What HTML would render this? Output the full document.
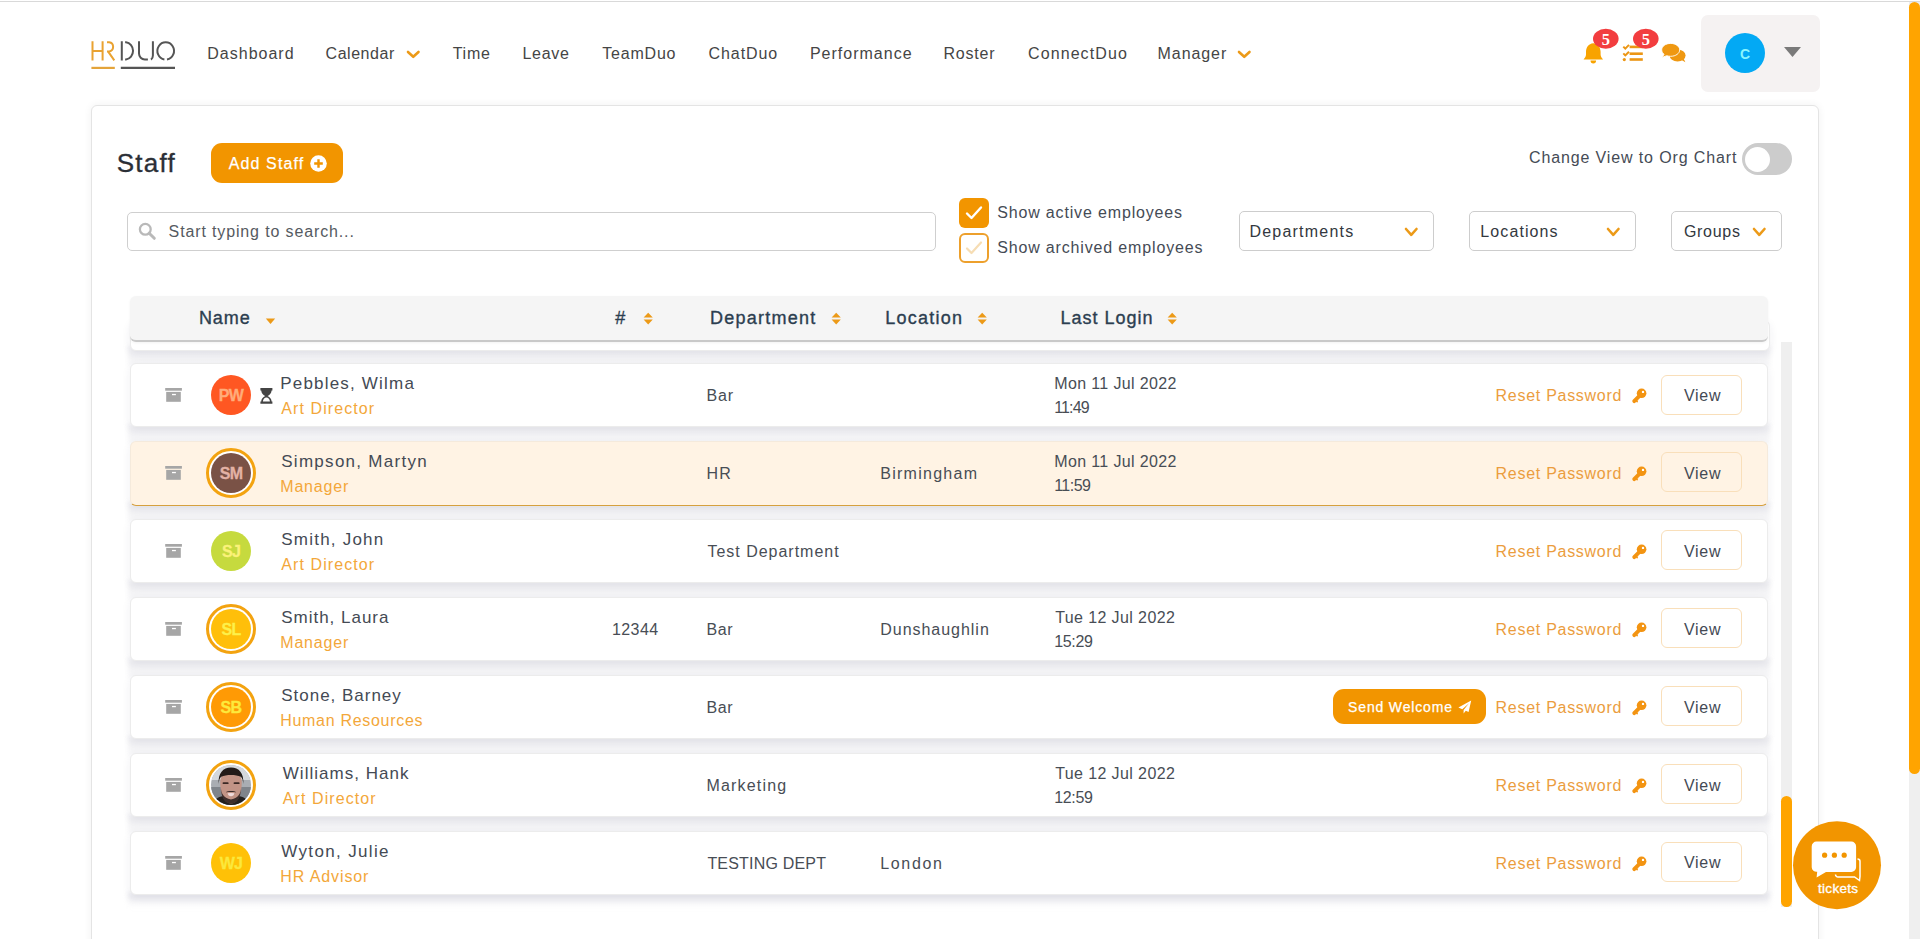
<!DOCTYPE html>
<html><head><meta charset="utf-8"><title>Staff</title>
<style>
html,body{margin:0;padding:0;}
body{width:1920px;height:939px;overflow:hidden;position:relative;background:#fff;font-family:"Liberation Sans", sans-serif;}
.t{position:absolute;white-space:nowrap;line-height:1;font-family:"Liberation Sans", sans-serif;}
svg{overflow:visible}
</style></head><body>
<div style="position:absolute;left:0px;top:1px;width:1920px;height:1px;background:#d9d9d9"></div>
<svg style="position:absolute;left:85px;top:35px" width="96" height="40" viewBox="85 35 96 40" fill="none">
<g stroke="#e9a231" stroke-width="2" stroke-linecap="butt">
<path d="M92.5 41.3V60.4M102.6 41.3V60.4M92.5 51.1H102.6"/>
<path d="M107 42.3H109.2A4.6 4.6 0 0 1 109.2 51.4H107M108.2 51.6L114.3 60.4"/>
</g>
<g stroke="#555" stroke-width="2">
<path d="M121.8 41.3V60.4M125.1 42.3H126A7.9 8.6 0 0 1 126 59.4H125.1"/>
<path d="M139 41.3V53.6A5.8 5.8 0 0 0 144.8 59.4H147.9M152.9 41.3V55.6Q152.9 58.3 151 59.6"/>
<path d="M164.4 59.4A8.3 8.6 0 1 1 167 59.4"/>
</g>
<path d="M91.4 67.9H114.8" stroke="#e4a43a" stroke-width="2.2"/>
<path d="M120.8 67.9H175" stroke="#555" stroke-width="2.2"/>
</svg>
<div class="t" style="left:207.30px;top:46.00px;font-size:16px;letter-spacing:1.003px;color:#454545;font-weight:400;">Dashboard</div>
<div class="t" style="left:325.60px;top:46.00px;font-size:16px;letter-spacing:0.528px;color:#454545;font-weight:400;">Calendar</div>
<div class="t" style="left:452.70px;top:46.00px;font-size:16px;letter-spacing:0.746px;color:#454545;font-weight:400;">Time</div>
<div class="t" style="left:522.50px;top:46.00px;font-size:16px;letter-spacing:0.676px;color:#454545;font-weight:400;">Leave</div>
<div class="t" style="left:602.20px;top:46.00px;font-size:16px;letter-spacing:0.804px;color:#454545;font-weight:400;">TeamDuo</div>
<div class="t" style="left:708.60px;top:46.00px;font-size:16px;letter-spacing:0.908px;color:#454545;font-weight:400;">ChatDuo</div>
<div class="t" style="left:809.90px;top:46.00px;font-size:16px;letter-spacing:1.010px;color:#454545;font-weight:400;">Performance</div>
<div class="t" style="left:943.50px;top:46.00px;font-size:16px;letter-spacing:0.801px;color:#454545;font-weight:400;">Roster</div>
<div class="t" style="left:1028.00px;top:46.00px;font-size:16px;letter-spacing:1.095px;color:#454545;font-weight:400;">ConnectDuo</div>
<div class="t" style="left:1157.60px;top:46.00px;font-size:16px;letter-spacing:0.913px;color:#454545;font-weight:400;">Manager</div>
<svg style="position:absolute;left:404.9px;top:49px" width="16.5" height="11" viewBox="404.9 49 16.5 11"><path d="M407.9 52L413.15 56.8L418.4 52" fill="none" stroke="#ec9a18" stroke-width="2.6" stroke-linecap="round" stroke-linejoin="round"/></svg>
<svg style="position:absolute;left:1235.8px;top:49px" width="16.5" height="11" viewBox="1235.8 49 16.5 11"><path d="M1238.8 52L1244.05 56.8L1249.3 52" fill="none" stroke="#ec9a18" stroke-width="2.6" stroke-linecap="round" stroke-linejoin="round"/></svg>
<svg style="position:absolute;left:1580px;top:24px" width="110" height="44" viewBox="1580 24 110 44">
<path fill="#f8a300" d="M1593.2 43.2c-4.6 0.4-7.2 4.2-7.2 8.6v2.6c0 1.9-1 3.3-2.1 4.6l-0.3 0.4h19.4l-0.3-0.4c-1.1-1.3-2.1-2.7-2.1-4.6v-2.6c0-4.4-2.6-8.2-7.2-8.6z"/>
<path fill="#f8a300" d="M1590.5 60.6h5.6a2.8 3 0 0 1-5.6 0z"/>
<g fill="#ec9614">
<path d="M1622.6 47.3l1.4-1.4 1.3 1.3 3-3 1.4 1.4-4.4 4.4z"/>
<path d="M1622.6 54.1l1.4-1.4 1.3 1.3 3-3 1.4 1.4-4.4 4.4z"/>
<circle cx="1624.3" cy="59.6" r="1.6"/>
<rect x="1629.6" y="45.6" width="13.2" height="2.6"/>
<rect x="1629.6" y="52.4" width="13.2" height="2.6"/>
<rect x="1629.6" y="58.2" width="13.2" height="2.6"/>
</g>
<ellipse cx="1677.6" cy="55.6" rx="8" ry="6" fill="#ef9811"/><path fill="#ef9811" d="M1681.5 60L1685.4 62.2L1683.6 58.5z"/>
<path fill="#ef9811" stroke="#fff" stroke-width="0.9" d="M1670.7 43.4c-5 0-9 2.9-9 6.5 0 1.7 0.9 3.3 2.4 4.4l-2.1 3.1 4.8-1.7c1.2 0.4 2.5 0.6 3.9 0.6 5 0 9-2.9 9-6.4s-4-6.5-9-6.5z"/>
<ellipse cx="1605.8" cy="38.8" rx="12.8" ry="10" fill="#f23d3f"/>
<ellipse cx="1645.8" cy="38.8" rx="12.8" ry="10" fill="#f23d3f"/>
<text x="1605.8" y="44.8" text-anchor="middle" font-family="Liberation Serif" font-weight="700" font-size="16.5" fill="#fff">5</text>
<text x="1645.8" y="44.8" text-anchor="middle" font-family="Liberation Serif" font-weight="700" font-size="16.5" fill="#fff">5</text>
</svg>
<div style="position:absolute;left:1700.5px;top:15px;width:119px;height:77px;background:#f5f2f2;border-radius:7px"></div>
<div style="position:absolute;left:1725px;top:33px;width:40px;height:40px;background:#03a9f4;border-radius:50%"></div>
<div class="t" style="left:1725px;top:47px;width:40px;text-align:center;font-size:14px;font-weight:700;color:#8af6ff">C</div>
<svg style="position:absolute;left:1783px;top:46px" width="20" height="12"><path d="M1 1H18L9.5 11z" fill="#7a7a7a"/></svg>
<div style="position:absolute;left:1909px;top:2px;width:11px;height:937px;background:#efefef"></div>
<div style="position:absolute;left:1909px;top:2px;width:11px;height:771.5px;background:#ffa400;border-radius:6px"></div>
<div style="position:absolute;left:91px;top:105px;width:1726px;height:900px;background:#fff;border:1px solid #e4e4e4;border-radius:6px;box-shadow:0 0 8px rgba(0,0,0,.06)"></div>
<div class="t" style="left:116.75px;top:150.00px;font-size:26px;letter-spacing:1.268px;color:#2b2f36;font-weight:400;-webkit-text-stroke:0.35px #2b2f36">Staff</div>
<div style="position:absolute;left:211px;top:143px;width:131.5px;height:39.5px;background:#f29500;border-radius:11px"></div>
<div class="t" style="left:228.75px;top:156.00px;font-size:16px;letter-spacing:1.114px;color:#fff;font-weight:400;-webkit-text-stroke:0.25px #fff">Add Staff</div>
<svg style="position:absolute;left:309.5px;top:154.5px" width="17" height="17" viewBox="0 0 17 17"><circle cx="8.5" cy="8.5" r="8.3" fill="#fff"/><path d="M8.5 4.2V12.8M4.2 8.5H12.8" stroke="#f29500" stroke-width="2.4"/></svg>
<div class="t" style="left:1529.00px;top:150.00px;font-size:16px;letter-spacing:0.873px;color:#454b55;font-weight:400;">Change View to Org Chart</div>
<div style="position:absolute;left:1742px;top:143px;width:50px;height:31.5px;background:#cccccc;border-radius:16px"></div>
<div style="position:absolute;left:1745.3px;top:146.7px;width:25px;height:25px;background:#fff;border-radius:50%"></div>
<div style="position:absolute;left:127px;top:211.5px;width:809px;height:39px;box-sizing:border-box;border:1px solid #cfcfcf;border-radius:5px;background:#fff"></div>
<svg style="position:absolute;left:138px;top:222px" width="19" height="19" viewBox="0 0 19 19"><circle cx="7.3" cy="7.3" r="5.4" fill="none" stroke="#b9b9b9" stroke-width="2.3"/><path d="M11.2 11.2L16.3 16.3" stroke="#b9b9b9" stroke-width="3" stroke-linecap="round"/></svg>
<div class="t" style="left:168.60px;top:224.00px;font-size:16px;letter-spacing:0.863px;color:#555a61;font-weight:400;">Start typing to search...</div>
<div style="position:absolute;left:959px;top:198px;width:30px;height:30px;background:#f29500;border-radius:6px"></div>
<svg style="position:absolute;left:959px;top:198px" width="30" height="30"><path d="M8 15.5L12.5 20L22 9.5" fill="none" stroke="#fff" stroke-width="2.4" stroke-linecap="round" stroke-linejoin="round"/></svg>
<div style="position:absolute;left:959px;top:233px;width:30px;height:30px;box-sizing:border-box;border:2.4px solid #eda02c;border-radius:6px"></div>
<svg style="position:absolute;left:959px;top:233px" width="30" height="30"><path d="M8 15.5L12.5 20L22 9.5" fill="none" stroke="#f6ddb4" stroke-width="2.2" stroke-linecap="round" stroke-linejoin="round"/></svg>
<div class="t" style="left:997.20px;top:205.00px;font-size:16px;letter-spacing:0.841px;color:#454b55;font-weight:400;">Show active employees</div>
<div class="t" style="left:997.20px;top:240.00px;font-size:16px;letter-spacing:0.842px;color:#454b55;font-weight:400;">Show archived employees</div>
<div style="position:absolute;left:1238.5px;top:211.3px;width:195px;height:39.3px;box-sizing:border-box;border:1px solid #cdcdcd;border-radius:5px;background:#fff"></div>
<div class="t" style="left:1249.40px;top:224.00px;font-size:16px;letter-spacing:1.221px;color:#333840;font-weight:400;">Departments</div>
<svg style="position:absolute;left:1402.7px;top:225.9px" width="16.5" height="12" viewBox="1402.7 225.9 16.5 12"><path d="M1405.7 228.9L1410.95 234.70000000000002L1416.2 228.9" fill="none" stroke="#ec9a18" stroke-width="2.6" stroke-linecap="round" stroke-linejoin="round"/></svg>
<div style="position:absolute;left:1469px;top:211.3px;width:167px;height:39.3px;box-sizing:border-box;border:1px solid #cdcdcd;border-radius:5px;background:#fff"></div>
<div class="t" style="left:1480.30px;top:224.00px;font-size:16px;letter-spacing:1.101px;color:#333840;font-weight:400;">Locations</div>
<svg style="position:absolute;left:1605.2px;top:225.9px" width="16.5" height="12" viewBox="1605.2 225.9 16.5 12"><path d="M1608.2 228.9L1613.45 234.70000000000002L1618.7 228.9" fill="none" stroke="#ec9a18" stroke-width="2.6" stroke-linecap="round" stroke-linejoin="round"/></svg>
<div style="position:absolute;left:1671.4px;top:211.3px;width:110.5px;height:39.3px;box-sizing:border-box;border:1px solid #cdcdcd;border-radius:5px;background:#fff"></div>
<div class="t" style="left:1683.90px;top:224.00px;font-size:16px;letter-spacing:0.726px;color:#333840;font-weight:400;">Groups</div>
<svg style="position:absolute;left:1750.6px;top:225.9px" width="16.5" height="12" viewBox="1750.6 225.9 16.5 12"><path d="M1753.6 228.9L1758.85 234.70000000000002L1764.1 228.9" fill="none" stroke="#ec9a18" stroke-width="2.6" stroke-linecap="round" stroke-linejoin="round"/></svg>
<div style="position:absolute;left:128px;top:346px;width:1641.5px;height:20.0px;background:linear-gradient(#eaeaee,#efeff2 25%,#f4f4f6 62%,#f6f6f8);filter:blur(2.5px)"></div>
<div style="position:absolute;left:128px;top:424.0px;width:1641.5px;height:19.93px;background:linear-gradient(#eaeaee,#efeff2 25%,#f4f4f6 62%,#f6f6f8);filter:blur(2.5px)"></div>
<div style="position:absolute;left:128px;top:501.93px;width:1641.5px;height:19.93px;background:linear-gradient(#eaeaee,#efeff2 25%,#f4f4f6 62%,#f6f6f8);filter:blur(2.5px)"></div>
<div style="position:absolute;left:128px;top:579.86px;width:1641.5px;height:19.93px;background:linear-gradient(#eaeaee,#efeff2 25%,#f4f4f6 62%,#f6f6f8);filter:blur(2.5px)"></div>
<div style="position:absolute;left:128px;top:657.79px;width:1641.5px;height:19.93px;background:linear-gradient(#eaeaee,#efeff2 25%,#f4f4f6 62%,#f6f6f8);filter:blur(2.5px)"></div>
<div style="position:absolute;left:128px;top:735.72px;width:1641.5px;height:19.93px;background:linear-gradient(#eaeaee,#efeff2 25%,#f4f4f6 62%,#f6f6f8);filter:blur(2.5px)"></div>
<div style="position:absolute;left:128px;top:813.65px;width:1641.5px;height:19.93px;background:linear-gradient(#eaeaee,#efeff2 25%,#f4f4f6 62%,#f6f6f8);filter:blur(2.5px)"></div>
<div style="position:absolute;left:128px;top:891.58px;width:1641.5px;height:15px;background:linear-gradient(#e9e9ee 20%,rgba(255,255,255,0));filter:blur(2.5px)"></div>
<div style="position:absolute;left:129.5px;top:320px;width:1638.5px;height:29px;background:#fff;border:1px solid #ececec;border-radius:6px;box-shadow:0 3px 10px rgba(40,40,80,.07)"></div>
<div style="position:absolute;left:129.5px;top:296px;width:1638px;height:46px;background:#f5f5f5;border-radius:6px;border-bottom:2px solid #c9c9c9;box-sizing:border-box;box-shadow:0 1px 3px rgba(0,0,0,.05)"></div>
<div class="t" style="left:198.90px;top:309.00px;font-size:18px;letter-spacing:0.965px;color:#2c3e50;font-weight:400;-webkit-text-stroke:0.35px #2c3e50">Name</div>
<svg style="position:absolute;left:265px;top:317px" width="11" height="8"><path d="M0.8 1.4H10.2L5.5 7z" fill="#ec9a18"/></svg>
<div class="t" style="left:615.30px;top:309.00px;font-size:18px;letter-spacing:0.000px;color:#2c3e50;font-weight:400;-webkit-text-stroke:0.35px #2c3e50">#</div>
<div class="t" style="left:709.90px;top:309.00px;font-size:18px;letter-spacing:1.262px;color:#2c3e50;font-weight:400;-webkit-text-stroke:0.35px #2c3e50">Department</div>
<div class="t" style="left:885.30px;top:309.00px;font-size:18px;letter-spacing:1.251px;color:#2c3e50;font-weight:400;-webkit-text-stroke:0.35px #2c3e50">Location</div>
<div class="t" style="left:1060.60px;top:309.00px;font-size:18px;letter-spacing:0.983px;color:#2c3e50;font-weight:400;-webkit-text-stroke:0.35px #2c3e50">Last Login</div>
<svg style="position:absolute;left:642.5px;top:311.5px" width="11" height="14" viewBox="0 0 11 14"><path d="M0.6 5.6L5.2 0.8L9.8 5.6z M0.6 7.6H9.8L5.2 12.6z" fill="#ec9a18"/></svg>
<svg style="position:absolute;left:830.5px;top:311.5px" width="11" height="14" viewBox="0 0 11 14"><path d="M0.6 5.6L5.2 0.8L9.8 5.6z M0.6 7.6H9.8L5.2 12.6z" fill="#ec9a18"/></svg>
<svg style="position:absolute;left:976.6px;top:311.5px" width="11" height="14" viewBox="0 0 11 14"><path d="M0.6 5.6L5.2 0.8L9.8 5.6z M0.6 7.6H9.8L5.2 12.6z" fill="#ec9a18"/></svg>
<svg style="position:absolute;left:1167.4px;top:311.5px" width="11" height="14" viewBox="0 0 11 14"><path d="M0.6 5.6L5.2 0.8L9.8 5.6z M0.6 7.6H9.8L5.2 12.6z" fill="#ec9a18"/></svg>
<div style="position:absolute;left:1781px;top:342px;width:11px;height:565px;background:#efefef"></div>
<div style="position:absolute;left:1781px;top:796px;width:11px;height:111px;background:#ffa400;border-radius:6px"></div>
<div style="position:absolute;left:129.5px;top:363.0px;width:1638.5px;height:64px;box-sizing:border-box;background:#fff;border:1px solid #ececec;border-radius:6px;box-shadow:0 3px 10px rgba(40,40,80,.07)"></div>
<svg style="position:absolute;left:165px;top:388.0px" width="17" height="14" viewBox="0 0 17 14"><rect x="0.2" y="0" width="16.7" height="2.7" fill="#a6a6a6"/><path d="M1.2 3.9H15.8V13.8H1.2z" fill="#a6a6a6"/><rect x="7" y="5.9" width="3.9" height="1.3" fill="#fff"/></svg>
<div style="position:absolute;left:211px;top:375.0px;width:40px;height:40px;background:#ff5722;border-radius:50%"></div>
<div class="t" style="left:211px;top:388.0px;width:40px;text-align:center;font-size:16px;font-weight:700;color:#ffac7a;letter-spacing:-0.7px;-webkit-text-stroke:0.3px #ffac7a">PW</div>
<svg style="position:absolute;left:260px;top:388.0px" width="13" height="16" viewBox="0 0 13 16"><path d="M0.4 0H12.4V2.4H11.6C11.4 5.2 9.4 6.9 7.6 8 9.8 9.2 11.6 11 11.6 13.6H12.4V15.8H0.4V13.6H1.2C1.2 11 3 9.2 5.2 8 3.4 6.9 1.4 5.2 1.2 2.4H0.4z" fill="#444"/><path d="M2.9 13.6C2.9 11.4 4.5 9.6 6.4 9.6C8.3 9.6 9.9 11.4 9.9 13.6z" fill="#fff"/></svg>
<div class="t" style="left:280.25px;top:375.00px;font-size:17px;letter-spacing:1.193px;color:#444a54;font-weight:400;">Pebbles, Wilma</div>
<div class="t" style="left:281.25px;top:401.00px;font-size:16px;letter-spacing:1.089px;color:#f3a73a;font-weight:400;">Art Director</div>
<div class="t" style="left:706.40px;top:388.30px;font-size:16px;letter-spacing:0.915px;color:#484d55;font-weight:400;">Bar</div>
<div class="t" style="left:1054.20px;top:376.40px;font-size:16px;letter-spacing:0.370px;color:#484d55;font-weight:400;">Mon 11 Jul 2022</div>
<div class="t" style="left:1054.20px;top:400.30px;font-size:16px;letter-spacing:-0.863px;color:#484d55;font-weight:400;">11:49</div>
<div class="t" style="left:1495.60px;top:388.25px;font-size:16px;letter-spacing:0.716px;color:#eb9d3e;font-weight:400;">Reset Password</div>
<svg style="position:absolute;left:1630px;top:387.0px" width="18" height="17" viewBox="1630 387 18 17"><circle cx="1641.6" cy="393.3" r="4.8" fill="#f39412"/><path d="M1640 395.3L1634.2 401.2" stroke="#f39412" stroke-width="3.8" stroke-linecap="round"/><path d="M1635.2 401.8L1637.6 402.6L1638.2 400.2z" fill="#f39412"/><circle cx="1643" cy="391.9" r="1.2" fill="#fff"/></svg>
<div style="position:absolute;left:1661.3px;top:374.5px;width:81px;height:40px;box-sizing:border-box;border:1.5px solid #f9dfba;border-radius:6px;background:#fff"></div>
<div class="t" style="left:1683.90px;top:387.90px;font-size:16px;letter-spacing:0.721px;color:#444a54;font-weight:400;">View</div>
<div style="position:absolute;left:129.5px;top:440.93px;width:1638.5px;height:65px;box-sizing:border-box;background:#fff3e4;border:1px solid #f5eadc;border-bottom:1px solid #d6a03e;border-radius:6px;box-shadow:0 3px 10px rgba(40,40,80,.07)"></div>
<svg style="position:absolute;left:165px;top:465.93px" width="17" height="14" viewBox="0 0 17 14"><rect x="0.2" y="0" width="16.7" height="2.7" fill="#a6a6a6"/><path d="M1.2 3.9H15.8V13.8H1.2z" fill="#a6a6a6"/><rect x="7" y="5.9" width="3.9" height="1.3" fill="#fff"/></svg>
<div style="position:absolute;left:206px;top:447.93px;width:50px;height:50px;box-sizing:border-box;border:3.8px solid #f3a310;border-radius:50%;background:#fff"></div>
<div style="position:absolute;left:211px;top:452.93px;width:40px;height:40px;background:#7a5246;border-radius:50%"></div>
<div class="t" style="left:211px;top:465.93px;width:40px;text-align:center;font-size:16px;font-weight:700;color:#e3b2a5;letter-spacing:-0.7px;-webkit-text-stroke:0.3px #e3b2a5">SM</div>
<div class="t" style="left:281.25px;top:452.93px;font-size:17px;letter-spacing:1.280px;color:#444a54;font-weight:400;">Simpson, Martyn</div>
<div class="t" style="left:280.25px;top:478.93px;font-size:16px;letter-spacing:0.822px;color:#f3a73a;font-weight:400;">Manager</div>
<div class="t" style="left:706.40px;top:466.23px;font-size:16px;letter-spacing:1.245px;color:#484d55;font-weight:400;">HR</div>
<div class="t" style="left:880.25px;top:466.23px;font-size:16px;letter-spacing:1.269px;color:#484d55;font-weight:400;">Birmingham</div>
<div class="t" style="left:1054.20px;top:454.33px;font-size:16px;letter-spacing:0.370px;color:#484d55;font-weight:400;">Mon 11 Jul 2022</div>
<div class="t" style="left:1054.20px;top:478.23px;font-size:16px;letter-spacing:-0.538px;color:#484d55;font-weight:400;">11:59</div>
<div class="t" style="left:1495.60px;top:466.18px;font-size:16px;letter-spacing:0.716px;color:#eb9d3e;font-weight:400;">Reset Password</div>
<svg style="position:absolute;left:1630px;top:464.93px" width="18" height="17" viewBox="1630 387 18 17"><circle cx="1641.6" cy="393.3" r="4.8" fill="#f39412"/><path d="M1640 395.3L1634.2 401.2" stroke="#f39412" stroke-width="3.8" stroke-linecap="round"/><path d="M1635.2 401.8L1637.6 402.6L1638.2 400.2z" fill="#f39412"/><circle cx="1643" cy="391.9" r="1.2" fill="#fff"/></svg>
<div style="position:absolute;left:1661.3px;top:452.43px;width:81px;height:40px;box-sizing:border-box;border:1.5px solid #f9dfba;border-radius:6px;background:#fff3e4"></div>
<div class="t" style="left:1683.90px;top:465.83px;font-size:16px;letter-spacing:0.721px;color:#444a54;font-weight:400;">View</div>
<div style="position:absolute;left:129.5px;top:518.86px;width:1638.5px;height:64px;box-sizing:border-box;background:#fff;border:1px solid #ececec;border-radius:6px;box-shadow:0 3px 10px rgba(40,40,80,.07)"></div>
<svg style="position:absolute;left:165px;top:543.86px" width="17" height="14" viewBox="0 0 17 14"><rect x="0.2" y="0" width="16.7" height="2.7" fill="#a6a6a6"/><path d="M1.2 3.9H15.8V13.8H1.2z" fill="#a6a6a6"/><rect x="7" y="5.9" width="3.9" height="1.3" fill="#fff"/></svg>
<div style="position:absolute;left:211px;top:530.86px;width:40px;height:40px;background:#c6da3e;border-radius:50%"></div>
<div class="t" style="left:211px;top:543.86px;width:40px;text-align:center;font-size:16px;font-weight:700;color:#fbf27a;letter-spacing:-0.7px;-webkit-text-stroke:0.3px #fbf27a">SJ</div>
<div class="t" style="left:281.25px;top:530.86px;font-size:17px;letter-spacing:1.224px;color:#444a54;font-weight:400;">Smith, John</div>
<div class="t" style="left:281.25px;top:556.86px;font-size:16px;letter-spacing:1.089px;color:#f3a73a;font-weight:400;">Art Director</div>
<div class="t" style="left:707.40px;top:544.16px;font-size:16px;letter-spacing:0.990px;color:#484d55;font-weight:400;">Test Department</div>
<div class="t" style="left:1495.60px;top:544.11px;font-size:16px;letter-spacing:0.716px;color:#eb9d3e;font-weight:400;">Reset Password</div>
<svg style="position:absolute;left:1630px;top:542.86px" width="18" height="17" viewBox="1630 387 18 17"><circle cx="1641.6" cy="393.3" r="4.8" fill="#f39412"/><path d="M1640 395.3L1634.2 401.2" stroke="#f39412" stroke-width="3.8" stroke-linecap="round"/><path d="M1635.2 401.8L1637.6 402.6L1638.2 400.2z" fill="#f39412"/><circle cx="1643" cy="391.9" r="1.2" fill="#fff"/></svg>
<div style="position:absolute;left:1661.3px;top:530.36px;width:81px;height:40px;box-sizing:border-box;border:1.5px solid #f9dfba;border-radius:6px;background:#fff"></div>
<div class="t" style="left:1683.90px;top:543.76px;font-size:16px;letter-spacing:0.721px;color:#444a54;font-weight:400;">View</div>
<div style="position:absolute;left:129.5px;top:596.79px;width:1638.5px;height:64px;box-sizing:border-box;background:#fff;border:1px solid #ececec;border-radius:6px;box-shadow:0 3px 10px rgba(40,40,80,.07)"></div>
<svg style="position:absolute;left:165px;top:621.79px" width="17" height="14" viewBox="0 0 17 14"><rect x="0.2" y="0" width="16.7" height="2.7" fill="#a6a6a6"/><path d="M1.2 3.9H15.8V13.8H1.2z" fill="#a6a6a6"/><rect x="7" y="5.9" width="3.9" height="1.3" fill="#fff"/></svg>
<div style="position:absolute;left:206px;top:603.79px;width:50px;height:50px;box-sizing:border-box;border:3.8px solid #f3a310;border-radius:50%;background:#fff"></div>
<div style="position:absolute;left:211px;top:608.79px;width:40px;height:40px;background:#ffbf0a;border-radius:50%"></div>
<div class="t" style="left:211px;top:621.79px;width:40px;text-align:center;font-size:16px;font-weight:700;color:#fdf04a;letter-spacing:-0.7px;-webkit-text-stroke:0.3px #fdf04a">SL</div>
<div class="t" style="left:281.25px;top:608.79px;font-size:17px;letter-spacing:0.984px;color:#444a54;font-weight:400;">Smith, Laura</div>
<div class="t" style="left:280.25px;top:634.79px;font-size:16px;letter-spacing:0.822px;color:#f3a73a;font-weight:400;">Manager</div>
<div class="t" style="left:611.90px;top:622.09px;font-size:16px;letter-spacing:0.452px;color:#484d55;font-weight:400;">12344</div>
<div class="t" style="left:706.40px;top:622.09px;font-size:16px;letter-spacing:0.665px;color:#484d55;font-weight:400;">Bar</div>
<div class="t" style="left:880.25px;top:622.09px;font-size:16px;letter-spacing:0.972px;color:#484d55;font-weight:400;">Dunshaughlin</div>
<div class="t" style="left:1055.20px;top:610.19px;font-size:16px;letter-spacing:0.396px;color:#484d55;font-weight:400;">Tue 12 Jul 2022</div>
<div class="t" style="left:1054.20px;top:634.09px;font-size:16px;letter-spacing:-0.335px;color:#484d55;font-weight:400;">15:29</div>
<div class="t" style="left:1495.60px;top:622.04px;font-size:16px;letter-spacing:0.716px;color:#eb9d3e;font-weight:400;">Reset Password</div>
<svg style="position:absolute;left:1630px;top:620.79px" width="18" height="17" viewBox="1630 387 18 17"><circle cx="1641.6" cy="393.3" r="4.8" fill="#f39412"/><path d="M1640 395.3L1634.2 401.2" stroke="#f39412" stroke-width="3.8" stroke-linecap="round"/><path d="M1635.2 401.8L1637.6 402.6L1638.2 400.2z" fill="#f39412"/><circle cx="1643" cy="391.9" r="1.2" fill="#fff"/></svg>
<div style="position:absolute;left:1661.3px;top:608.29px;width:81px;height:40px;box-sizing:border-box;border:1.5px solid #f9dfba;border-radius:6px;background:#fff"></div>
<div class="t" style="left:1683.90px;top:621.69px;font-size:16px;letter-spacing:0.721px;color:#444a54;font-weight:400;">View</div>
<div style="position:absolute;left:129.5px;top:674.72px;width:1638.5px;height:64px;box-sizing:border-box;background:#fff;border:1px solid #ececec;border-radius:6px;box-shadow:0 3px 10px rgba(40,40,80,.07)"></div>
<svg style="position:absolute;left:165px;top:699.72px" width="17" height="14" viewBox="0 0 17 14"><rect x="0.2" y="0" width="16.7" height="2.7" fill="#a6a6a6"/><path d="M1.2 3.9H15.8V13.8H1.2z" fill="#a6a6a6"/><rect x="7" y="5.9" width="3.9" height="1.3" fill="#fff"/></svg>
<div style="position:absolute;left:206px;top:681.72px;width:50px;height:50px;box-sizing:border-box;border:3.8px solid #f3a310;border-radius:50%;background:#fff"></div>
<div style="position:absolute;left:211px;top:686.72px;width:40px;height:40px;background:#ff9a05;border-radius:50%"></div>
<div class="t" style="left:211px;top:699.72px;width:40px;text-align:center;font-size:16px;font-weight:700;color:#fde93c;letter-spacing:-0.7px;-webkit-text-stroke:0.3px #fde93c">SB</div>
<div class="t" style="left:281.25px;top:686.72px;font-size:17px;letter-spacing:0.980px;color:#444a54;font-weight:400;">Stone, Barney</div>
<div class="t" style="left:280.25px;top:712.72px;font-size:16px;letter-spacing:0.696px;color:#f3a73a;font-weight:400;">Human Resources</div>
<div class="t" style="left:706.40px;top:700.02px;font-size:16px;letter-spacing:0.665px;color:#484d55;font-weight:400;">Bar</div>
<div style="position:absolute;left:1333.1px;top:688.9200000000001px;width:152.8px;height:35px;background:#f29500;border-radius:11px"></div>
<div class="t" style="left:1348.10px;top:699.92px;font-size:14px;letter-spacing:0.837px;color:#fff;font-weight:400;-webkit-text-stroke:0.25px #fff">Send Welcome</div>
<svg style="position:absolute;left:1458px;top:699.72px" width="14" height="14" viewBox="0 0 14 14"><path d="M13.2 0.4L0.4 7.6L4.3 9.2L11 3.3L5.6 10L5.6 13.4L7.8 10.8L10.6 12z" fill="#fff"/></svg>
<div class="t" style="left:1495.60px;top:699.97px;font-size:16px;letter-spacing:0.716px;color:#eb9d3e;font-weight:400;">Reset Password</div>
<svg style="position:absolute;left:1630px;top:698.72px" width="18" height="17" viewBox="1630 387 18 17"><circle cx="1641.6" cy="393.3" r="4.8" fill="#f39412"/><path d="M1640 395.3L1634.2 401.2" stroke="#f39412" stroke-width="3.8" stroke-linecap="round"/><path d="M1635.2 401.8L1637.6 402.6L1638.2 400.2z" fill="#f39412"/><circle cx="1643" cy="391.9" r="1.2" fill="#fff"/></svg>
<div style="position:absolute;left:1661.3px;top:686.22px;width:81px;height:40px;box-sizing:border-box;border:1.5px solid #f9dfba;border-radius:6px;background:#fff"></div>
<div class="t" style="left:1683.90px;top:699.62px;font-size:16px;letter-spacing:0.721px;color:#444a54;font-weight:400;">View</div>
<div style="position:absolute;left:129.5px;top:752.65px;width:1638.5px;height:64px;box-sizing:border-box;background:#fff;border:1px solid #ececec;border-radius:6px;box-shadow:0 3px 10px rgba(40,40,80,.07)"></div>
<svg style="position:absolute;left:165px;top:777.65px" width="17" height="14" viewBox="0 0 17 14"><rect x="0.2" y="0" width="16.7" height="2.7" fill="#a6a6a6"/><path d="M1.2 3.9H15.8V13.8H1.2z" fill="#a6a6a6"/><rect x="7" y="5.9" width="3.9" height="1.3" fill="#fff"/></svg>
<div style="position:absolute;left:206px;top:759.65px;width:50px;height:50px;box-sizing:border-box;border:3.8px solid #f3a310;border-radius:50%;background:#fff"></div>
<svg style="position:absolute;left:211px;top:764.65px" width="40" height="40" viewBox="0 0 40 40">
<defs><clipPath id="cp"><circle cx="20" cy="20" r="20"/></clipPath></defs>
<g clip-path="url(#cp)">
<rect width="40" height="40" fill="#a9adb3"/><rect y="0" width="40" height="15" fill="#d4d8dc"/><rect y="22" width="40" height="18" fill="#7f848b"/>
<path d="M2 40C3 34 7 32 12 31L20 36 28 31C33 32 37 34 38 40z" fill="#24201f"/>
<path d="M9.2 17C9.2 28 13 38.6 20 38.6S30.8 28 30.8 17C30.8 10 26 6.5 20 6.5S9.2 10 9.2 17z" fill="#c29486"/>
<path d="M7.6 19C7 8 12 2.5 20 2.5S33 8 32.4 19C32 16 31.5 13 29.8 11.8 27 10.5 24 10 20 10S13 10.5 10.2 11.8C8.5 13 8 16 7.6 19z" fill="#221b19"/>
<path d="M9.8 23C10.5 33 14 38.8 20 38.8S29.5 33 30.2 23C29.5 28 28 33 20 34.5 12 33 10.5 28 9.8 23z" fill="#3d2e2c"/>
<path d="M14.8 27.4C16 25.6 24 25.6 25.2 27.4 23 26.8 17 26.8 14.8 27.4z" fill="#3d2e2c"/>
<path d="M16.6 28.3Q20 27.7 23.4 28.3Q22.8 31.2 20 31.2Q17.2 31.2 16.6 28.3z" fill="#f0dcdc"/>
<rect x="11.6" y="17.2" width="6" height="1.9" rx="0.9" fill="#3a2824"/><rect x="22.6" y="17.2" width="6" height="1.9" rx="0.9" fill="#3a2824"/>
</g></svg>
<div class="t" style="left:282.80px;top:764.65px;font-size:17px;letter-spacing:1.023px;color:#444a54;font-weight:400;">Williams, Hank</div>
<div class="t" style="left:282.80px;top:790.65px;font-size:16px;letter-spacing:1.080px;color:#f3a73a;font-weight:400;">Art Director</div>
<div class="t" style="left:706.40px;top:777.95px;font-size:16px;letter-spacing:1.194px;color:#484d55;font-weight:400;">Marketing</div>
<div class="t" style="left:1055.20px;top:766.05px;font-size:16px;letter-spacing:0.396px;color:#484d55;font-weight:400;">Tue 12 Jul 2022</div>
<div class="t" style="left:1054.20px;top:789.95px;font-size:16px;letter-spacing:-0.335px;color:#484d55;font-weight:400;">12:59</div>
<div class="t" style="left:1495.60px;top:777.90px;font-size:16px;letter-spacing:0.716px;color:#eb9d3e;font-weight:400;">Reset Password</div>
<svg style="position:absolute;left:1630px;top:776.65px" width="18" height="17" viewBox="1630 387 18 17"><circle cx="1641.6" cy="393.3" r="4.8" fill="#f39412"/><path d="M1640 395.3L1634.2 401.2" stroke="#f39412" stroke-width="3.8" stroke-linecap="round"/><path d="M1635.2 401.8L1637.6 402.6L1638.2 400.2z" fill="#f39412"/><circle cx="1643" cy="391.9" r="1.2" fill="#fff"/></svg>
<div style="position:absolute;left:1661.3px;top:764.15px;width:81px;height:40px;box-sizing:border-box;border:1.5px solid #f9dfba;border-radius:6px;background:#fff"></div>
<div class="t" style="left:1683.90px;top:777.55px;font-size:16px;letter-spacing:0.721px;color:#444a54;font-weight:400;">View</div>
<div style="position:absolute;left:129.5px;top:830.58px;width:1638.5px;height:64px;box-sizing:border-box;background:#fff;border:1px solid #ececec;border-radius:6px;box-shadow:0 3px 10px rgba(40,40,80,.07)"></div>
<svg style="position:absolute;left:165px;top:855.58px" width="17" height="14" viewBox="0 0 17 14"><rect x="0.2" y="0" width="16.7" height="2.7" fill="#a6a6a6"/><path d="M1.2 3.9H15.8V13.8H1.2z" fill="#a6a6a6"/><rect x="7" y="5.9" width="3.9" height="1.3" fill="#fff"/></svg>
<div style="position:absolute;left:211px;top:842.58px;width:40px;height:40px;background:#ffc107;border-radius:50%"></div>
<div class="t" style="left:211px;top:855.58px;width:40px;text-align:center;font-size:16px;font-weight:700;color:#fbe83c;letter-spacing:-0.7px;-webkit-text-stroke:0.3px #fbe83c">WJ</div>
<div class="t" style="left:281.25px;top:842.58px;font-size:17px;letter-spacing:1.352px;color:#444a54;font-weight:400;">Wyton, Julie</div>
<div class="t" style="left:280.25px;top:868.58px;font-size:16px;letter-spacing:0.908px;color:#f3a73a;font-weight:400;">HR Advisor</div>
<div class="t" style="left:707.40px;top:855.88px;font-size:16px;letter-spacing:0.197px;color:#484d55;font-weight:400;">TESTING DEPT</div>
<div class="t" style="left:880.25px;top:855.88px;font-size:16px;letter-spacing:1.652px;color:#484d55;font-weight:400;">London</div>
<div class="t" style="left:1495.60px;top:855.83px;font-size:16px;letter-spacing:0.716px;color:#eb9d3e;font-weight:400;">Reset Password</div>
<svg style="position:absolute;left:1630px;top:854.58px" width="18" height="17" viewBox="1630 387 18 17"><circle cx="1641.6" cy="393.3" r="4.8" fill="#f39412"/><path d="M1640 395.3L1634.2 401.2" stroke="#f39412" stroke-width="3.8" stroke-linecap="round"/><path d="M1635.2 401.8L1637.6 402.6L1638.2 400.2z" fill="#f39412"/><circle cx="1643" cy="391.9" r="1.2" fill="#fff"/></svg>
<div style="position:absolute;left:1661.3px;top:842.08px;width:81px;height:40px;box-sizing:border-box;border:1.5px solid #f9dfba;border-radius:6px;background:#fff"></div>
<div class="t" style="left:1683.90px;top:855.48px;font-size:16px;letter-spacing:0.721px;color:#444a54;font-weight:400;">View</div>
<svg style="position:absolute;left:1790px;top:818px" width="95" height="95" viewBox="1790 818 95 95">
<circle cx="1837" cy="865.2" r="44" fill="#f29500"/>
<path d="M1816.5 841.6H1851.3A4.8 4.8 0 0 1 1856.1 846.4V867.2A4.8 4.8 0 0 1 1851.3 872H1826L1816.6 877.4L1817.2 871.8A4.8 4.8 0 0 1 1811.7 867.2V846.4A4.8 4.8 0 0 1 1816.5 841.6z" fill="#fff"/>
<circle cx="1824.6" cy="855.2" r="2.6" fill="#f29500"/><circle cx="1834.4" cy="855.2" r="2.6" fill="#f29500"/><circle cx="1844.2" cy="855.2" r="2.6" fill="#f29500"/>
<path d="M1857.5 859A2.5 2.5 0 0 1 1860 861.5V876.5L1859.5 880.5L1854.5 877H1838A2.5 2.5 0 0 1 1835.5 874.5" fill="none" stroke="#fff" stroke-width="1.5"/>
<text x="1838.2" y="892.6" text-anchor="middle" font-family="Liberation Sans" font-size="13.5" fill="#fff" stroke="#fff" stroke-width="0.35" letter-spacing="0.3">tickets</text>
</svg>
</body></html>
